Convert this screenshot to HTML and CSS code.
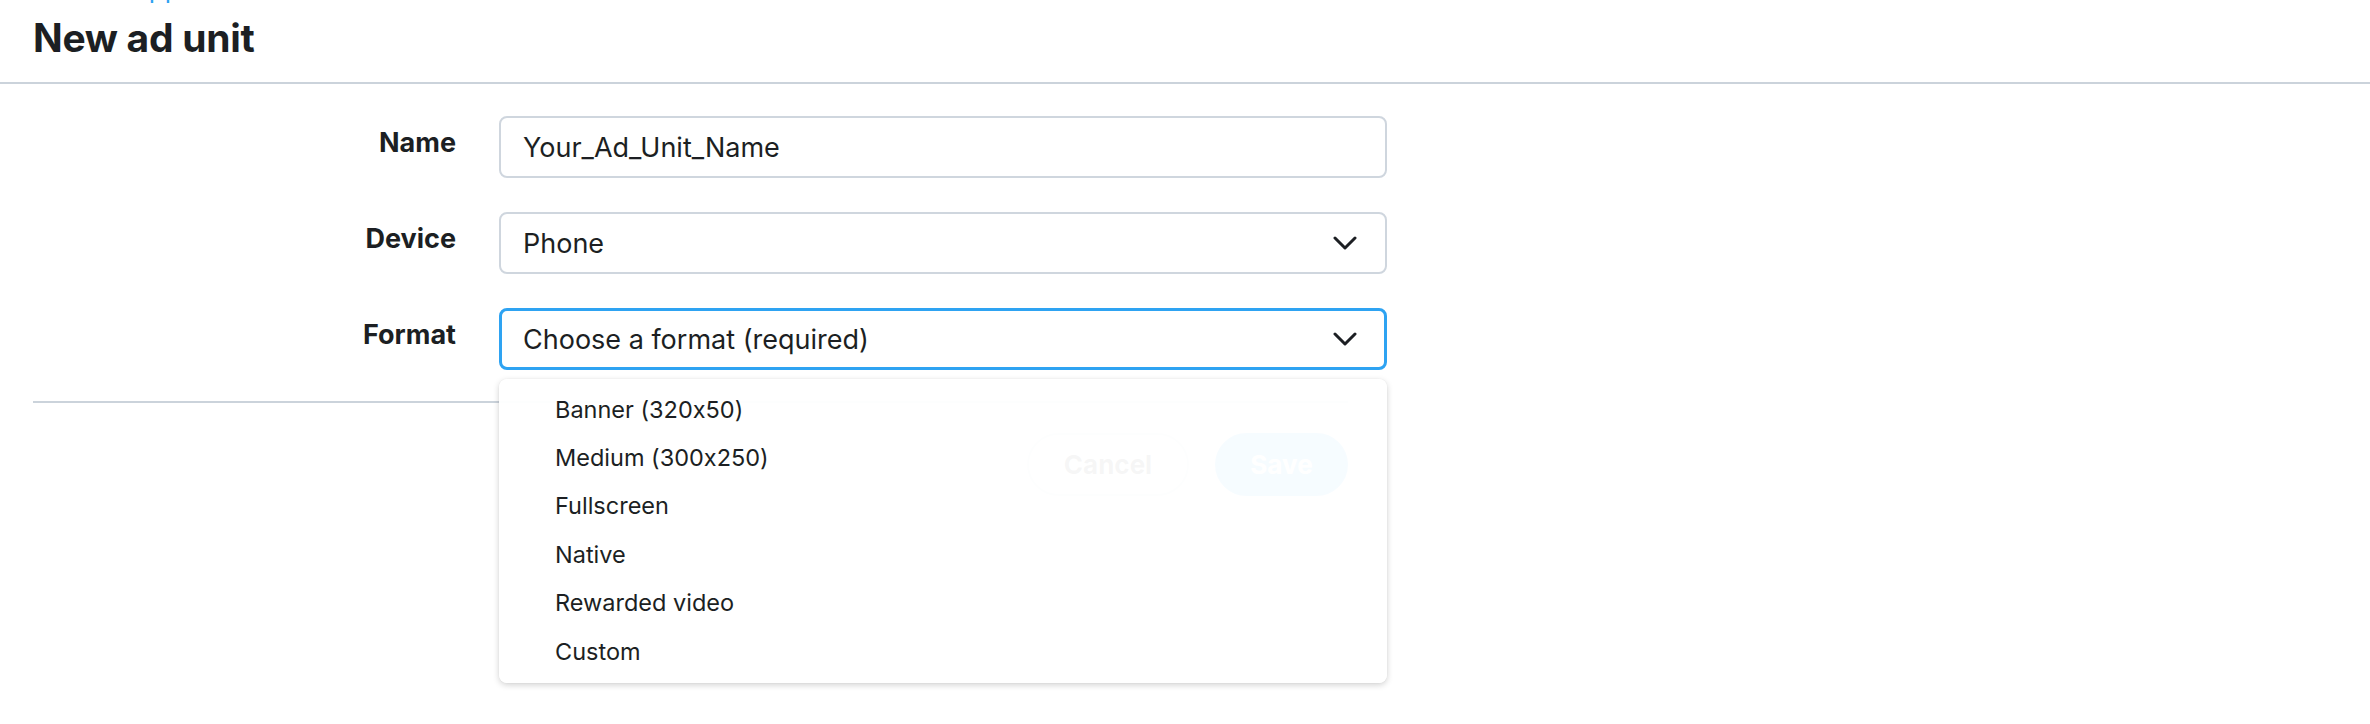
FILE: index.html
```html
<!DOCTYPE html>
<html lang="en">
<head>
<meta charset="utf-8">
<title>New ad unit</title>
<link rel="stylesheet" href="styles.css">
</head>
<body>
<header class="page-head">
  <a class="back-link" href="#">Back to app</a>
  <h1 class="title">New ad unit</h1>
</header>
<main class="form">
  <div class="form-grid">
    <label class="label" for="name">Name</label>
    <div class="field">
      <input id="name" class="control" type="text" value="Your_Ad_Unit_Name">
    </div>

    <div class="label">Device</div>
    <div class="field">
      <div class="control select">
        <span>Phone</span>
        <svg class="chevron" viewBox="0 0 24 14" width="24" height="14"><path d="M2 2 L12 12 L22 2" fill="none" stroke="#1c1f23" stroke-width="3" stroke-linecap="round" stroke-linejoin="round"/></svg>
      </div>
    </div>

    <div class="label">Format</div>
    <div class="field select-wrap">
      <div class="control select focused">
        <span>Choose a format (required)</span>
        <svg class="chevron" viewBox="0 0 24 14" width="24" height="14"><path d="M2 2 L12 12 L22 2" fill="none" stroke="#1c1f23" stroke-width="3" stroke-linecap="round" stroke-linejoin="round"/></svg>
      </div>
      <ul class="menu">
        <li class="menu-item">Banner (320x50)</li>
        <li class="menu-item">Medium (300x250)</li>
        <li class="menu-item">Fullscreen</li>
        <li class="menu-item">Native</li>
        <li class="menu-item">Rewarded video</li>
        <li class="menu-item">Custom</li>
      </ul>
    </div>
  </div>
  <div class="footer">
    <button class="btn btn-cancel" type="button">Cancel</button>
    <button class="btn btn-save" type="button">Save</button>
  </div>
</main>
</body>
</html>
```

FILE: styles.css
```css
* { box-sizing: border-box; }

html {
  overflow: hidden;
  background: #ffffff;
}

body {
  margin: 0;
  padding: 0;
  min-height: 724px;
  background: #ffffff;
  font-family: "Inter", "Noto Sans", sans-serif;
  font-feature-settings: "calt" 0;
  color: #1c1f23;
}

.page-head {
  padding: 0 0 22px 33px;
  border-bottom: 2px solid #cbd3db;
}

.back-link {
  display: block;
  margin-top: -24px;
  padding-left: 2px;
  height: 26px;
  font-size: 26px;
  line-height: 26px;
  color: #2ea3f2;
  text-decoration: none;
}

.title {
  margin: 14px 0 0;
  font-size: 39px;
  line-height: 44px;
  font-weight: 700;
  letter-spacing: -0.3px;
}

.form {
  padding-top: 32px;
}

.form-grid {
  display: grid;
  grid-template-columns: 456px 888px;
  column-gap: 43px;
  row-gap: 34px;
}

.label {
  text-align: right;
  font-size: 27px;
  font-weight: 700;
  line-height: 32px;
  padding-top: 11px;
}

.field {
  position: relative;
}

.control {
  display: flex;
  align-items: center;
  width: 100%;
  height: 62px;
  margin: 0;
  padding: 0 22px;
  border: 2px solid #cfd6de;
  border-radius: 8px;
  background: #fff;
  font-family: inherit;
  font-feature-settings: "calt" 0;
  font-size: 27px;
  color: #1c1f23;
  outline: none;
}

.select {
  justify-content: space-between;
  padding-right: 28px;
}

.select.focused {
  border: 3px solid #2ea3f2;
  padding-left: 21px;
  padding-right: 27px;
}

.chevron {
  display: block;
  flex: none;
}

.menu {
  position: absolute;
  top: 71px;
  left: 0;
  width: 100%;
  margin: 0;
  padding: 6px 0 8px;
  list-style: none;
  background: rgba(255, 255, 255, 0.96);
  border-radius: 8px;
  box-shadow: 0 2px 6px rgba(0, 0, 0, 0.18), 0 0 1px rgba(0, 0, 0, 0.12);
  z-index: 10;
}

.menu-item {
  height: 48.4px;
  display: flex;
  align-items: center;
  padding-left: 56px;
  font-size: 23.5px;
  color: #1c1f23;
}

.footer {
  margin: 31px 0 0 33px;
  width: 1315px;
  border-top: 2px solid #cbd3db;
  padding-top: 30px;
  display: flex;
  justify-content: flex-end;
  gap: 26px;
}

.btn {
  height: 63px;
  border-radius: 32px;
  font-family: inherit;
  font-size: 26px;
  font-weight: 700;
  padding: 0;
}

.btn-cancel {
  width: 162px;
  background: #fff;
  border: 2px solid #cfd6de;
  color: #1c1f23;
}

.btn-save {
  width: 133px;
  background: #2ea3f2;
  border: 2px solid #2ea3f2;
  color: #fff;
}
```
